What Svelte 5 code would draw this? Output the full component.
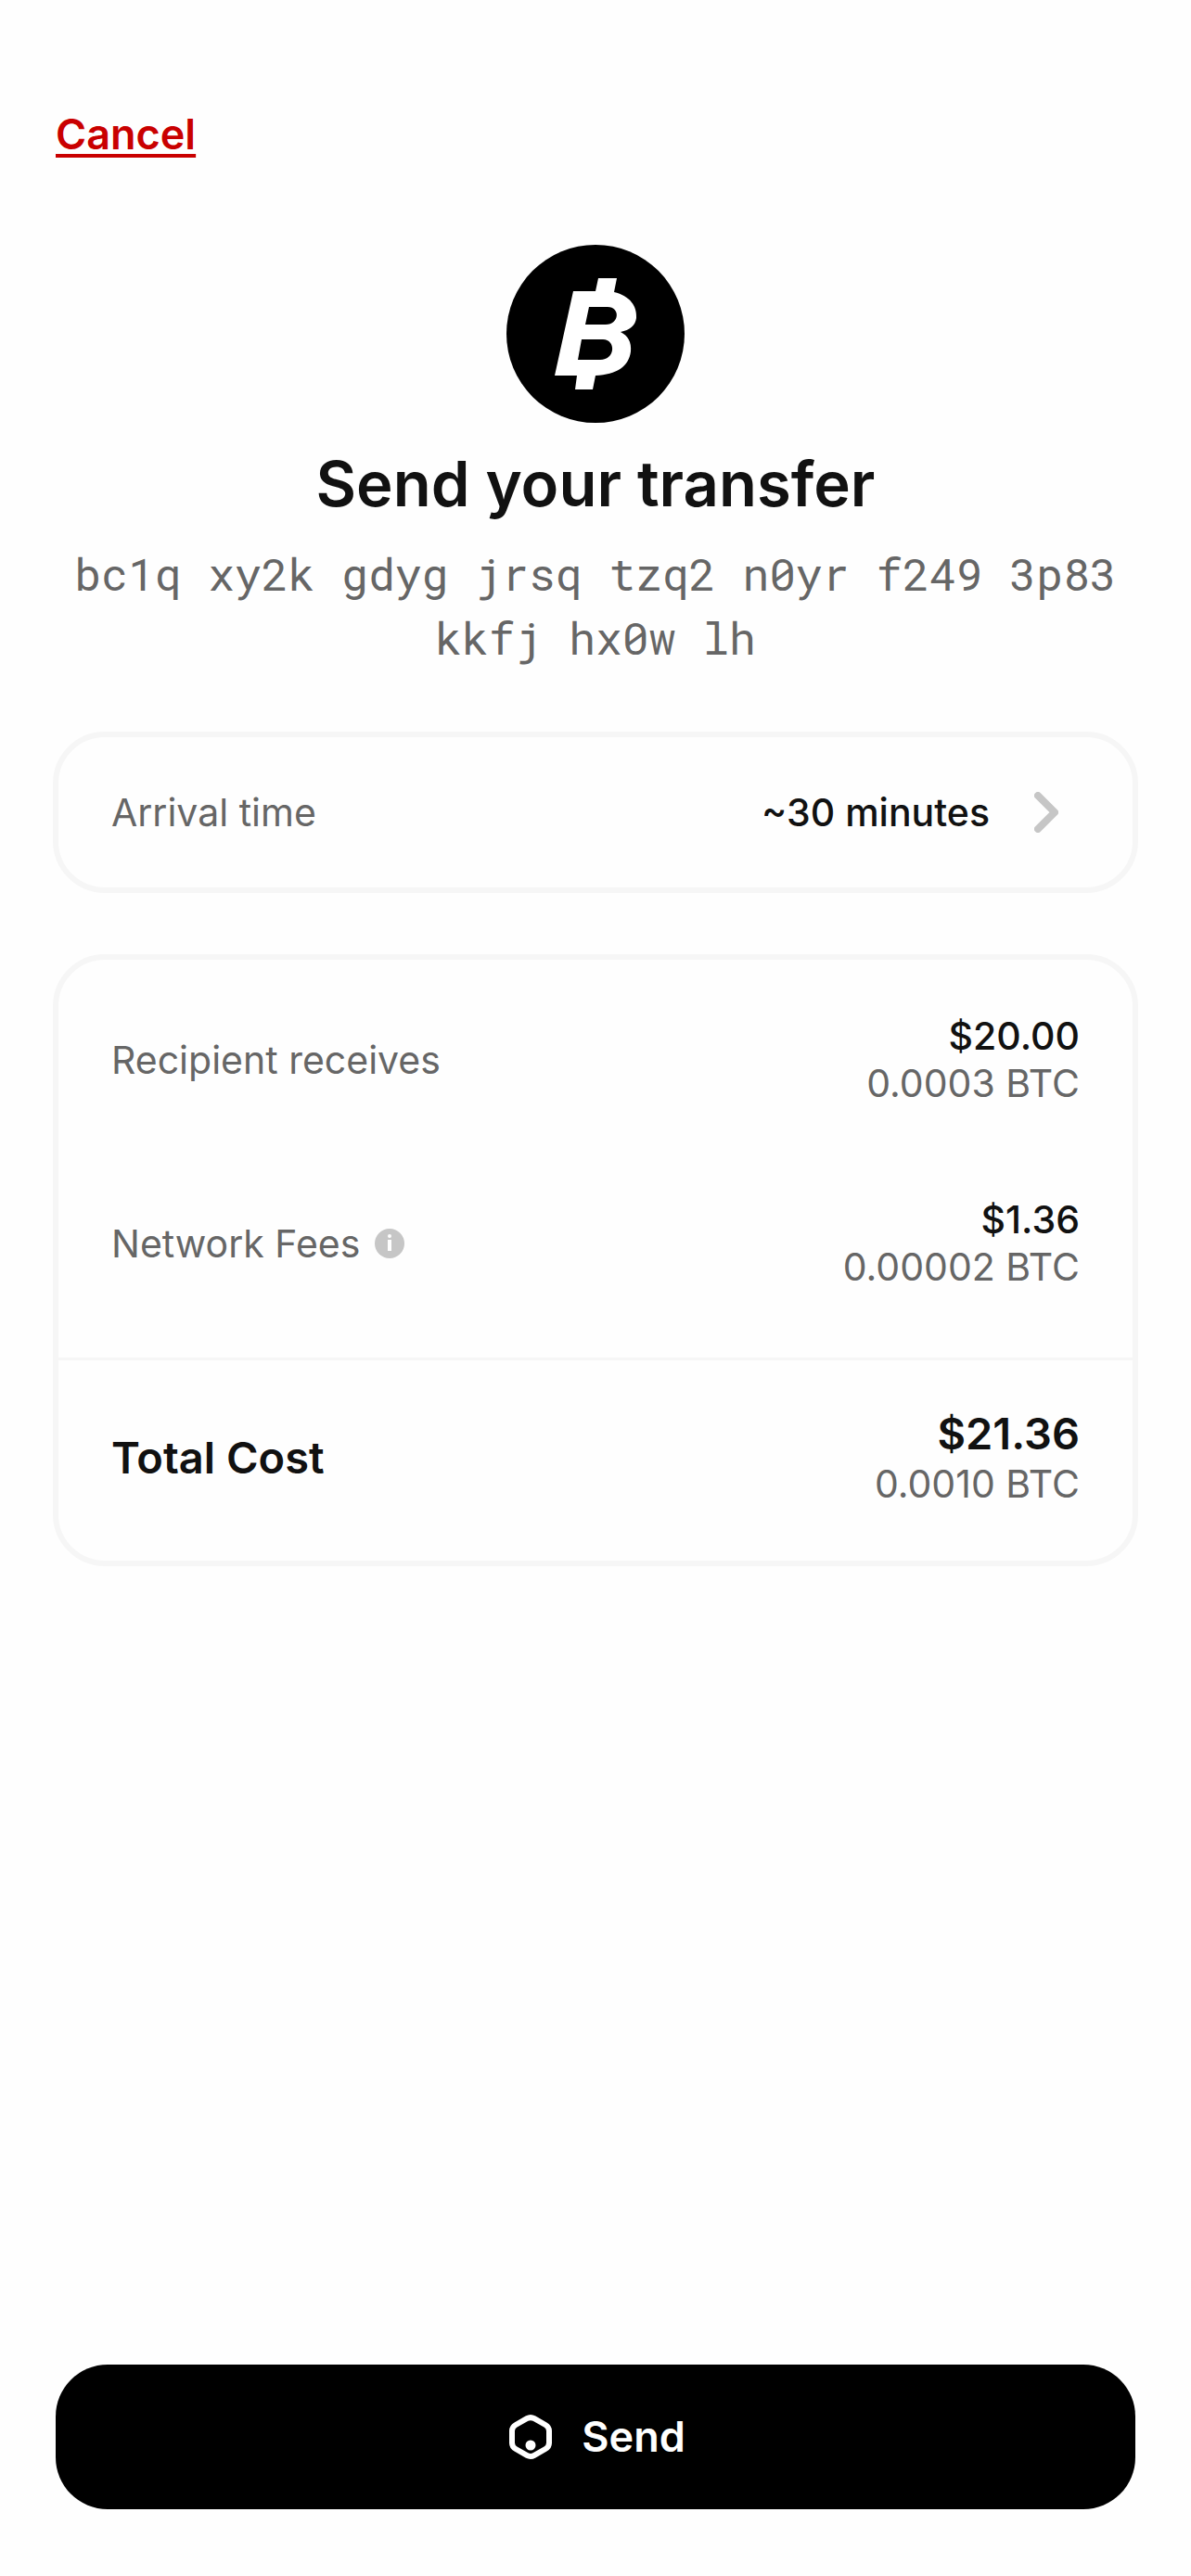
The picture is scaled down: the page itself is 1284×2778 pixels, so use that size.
<script>
  const address = 'bc1q xy2k gdyg jrsq tzq2 n0yr f249 3p83 kkfj hx0w lh';
  const costs = [
    { label: 'Recipient receives', usd: '$20.00', btc: '0.0003 BTC', info: false },
    { label: 'Network Fees', usd: '$1.36', btc: '0.00002 BTC', info: true }
  ];
  const total = { label: 'Total Cost', usd: '$21.36', btc: '0.0010 BTC' };
</script>

<div class="screen">
  <header>
    <a class="cancel" href="#cancel">Cancel</a>
  </header>

  <main>
    <section class="intro">
      <svg class="coin" viewBox="0 0 192 192" aria-hidden="true">
        <circle cx="96" cy="96" r="96" fill="#000" />
        <path
          fill="#fff"
          fill-rule="evenodd"
          d="M72 50H96L99 36H119L116 51C133 55 141 66 140 79C139 87 133 92 123 94C131 98 135 105 134 115C132 131 119 140 96 141L93 156H74L76 141H52ZM89 67L85 86H107C122 86 123 67 109 67ZM81 102L77 124H101C118 124 118 102 104 102Z"
        />
      </svg>
      <h1>Send your transfer</h1>
      <p class="address">{address}</p>
    </section>

    <button class="card arrival" type="button">
      <span class="label">Arrival time</span>
      <span class="usd">~30 minutes</span>
      <svg class="chevron" viewBox="0 0 26 44" aria-hidden="true">
        <path d="M4 4L22 22L4 40" fill="none" stroke="#c6c6c6" stroke-width="8" stroke-linecap="round" stroke-linejoin="round" />
      </svg>
    </button>

    <section class="card">
      <dl class="costs">
        {#each costs as cost}
          <div class="row">
            <dt class="label">
              {cost.label}
              {#if cost.info}
                <button class="info" type="button" aria-label="About network fees">
                  <svg viewBox="0 0 32 32" aria-hidden="true">
                    <circle cx="16" cy="16" r="16" fill="#c6c6c6" />
                    <circle cx="16" cy="8" r="2" fill="#fff" />
                    <path d="M14 12H18V24H14Z" fill="#fff" />
                  </svg>
                </button>
              {/if}
            </dt>
            <dd>
              <span class="usd">{cost.usd}</span>
              <span class="btc">{cost.btc}</span>
            </dd>
          </div>
        {/each}
      </dl>
      <dl class="total">
        <div class="row">
          <dt>{total.label}</dt>
          <dd>
            <span class="sum">{total.usd}</span>
            <span class="btc">{total.btc}</span>
          </dd>
        </div>
      </dl>
    </section>
  </main>

  <footer>
    <button class="send" type="button">
      <svg viewBox="-4 -3 54 54" aria-hidden="true">
        <path
          d="M19 4.2Q23 2 27 4.2L39 11Q43 13.3 43 17.5V30.500Q43 34.700 39 37L27 43.800Q23 46 19 43.800L7 37Q3 34.700 3 30.500V17.500Q3 13.300 7 11Z"
          fill="none"
          stroke="#fff"
          stroke-width="6"
        />
        <circle cx="23" cy="33" r="5.500" fill="#fff" />
      </svg>
      Send
    </button>
  </footer>
</div>

<style>
  :global(body) {
    margin: 0;
    background: #fefefe;
  }

  .screen {
    box-sizing: border-box;
    min-height: 100vh;
    display: flex;
    flex-direction: column;
    padding: 118px 60px 72px;
    font-family: Inter, 'Liberation Sans', sans-serif;
    font-size: 41px;
    line-height: 51px;
    color: #111;
  }

  button {
    font: inherit;
    color: inherit;
    border: 0;
    padding: 0;
    background: none;
    cursor: pointer;
  }

  svg {
    display: block;
  }

  header {
    display: flex;
    line-height: 54px;
  }

  .cancel {
    font-size: 45px;
    font-weight: 600;
    color: #c90000;
    text-decoration: underline;
    text-decoration-thickness: 4px;
    text-underline-offset: 5px;
    text-decoration-skip-ink: none;
  }

  main {
    flex: 1;
    display: flex;
    flex-direction: column;
    margin-top: 92px;
  }

  .intro {
    display: flex;
    flex-direction: column;
    align-items: center;
    text-align: center;
    margin-bottom: 67px;
  }

  .coin {
    width: 192px;
  }

  h1 {
    margin: 24px 0 20px;
    font-size: 67px;
    line-height: 84px;
    font-weight: 600;
  }

  .address {
    margin: 0;
    font-family: 'Roboto Mono', 'Liberation Mono', monospace;
    font-size: 48px;
    line-height: 69px;
    color: #666;
  }

  .card {
    margin: 0 -3px;
    border: 6px solid #f6f6f6;
    border-radius: 56px;
  }

  .arrival {
    display: flex;
    align-items: center;
    padding: 54px 80px 54px 57px;
    line-height: 54px;
    margin-bottom: 66px;
  }

  .arrival .usd {
    margin-left: auto;
  }

  .chevron {
    width: 26px;
    margin-left: 48px;
  }

  .label {
    color: #666;
  }

  dl,
  dd {
    margin: 0;
  }

  .costs {
    display: flex;
    flex-direction: column;
    gap: 96px;
    padding: 57px 57px 72px;
  }

  .total {
    padding: 50px 57px 57px;
    border-top: 3px solid #f6f6f6;
  }

  .row {
    display: flex;
    align-items: center;
    justify-content: space-between;
  }

  dt {
    display: flex;
    align-items: center;
    gap: 16px;
  }

  dd {
    display: flex;
    flex-direction: column;
    text-align: right;
  }

  .usd {
    font-weight: 500;
  }

  .btc {
    color: #666;
  }

  .info svg {
    width: 32px;
  }

  .total dt,
  .sum {
    font-size: 47px;
    line-height: 58px;
    font-weight: 600;
  }

  .send {
    width: 100%;
    display: flex;
    align-items: center;
    justify-content: center;
    gap: 28px;
    padding: 51px;
    border-radius: 56px;
    background: #000;
    color: #fff;
    font-size: 45px;
    line-height: 54px;
    font-weight: 600;
  }

  .send svg {
    width: 54px;
  }
</style>
